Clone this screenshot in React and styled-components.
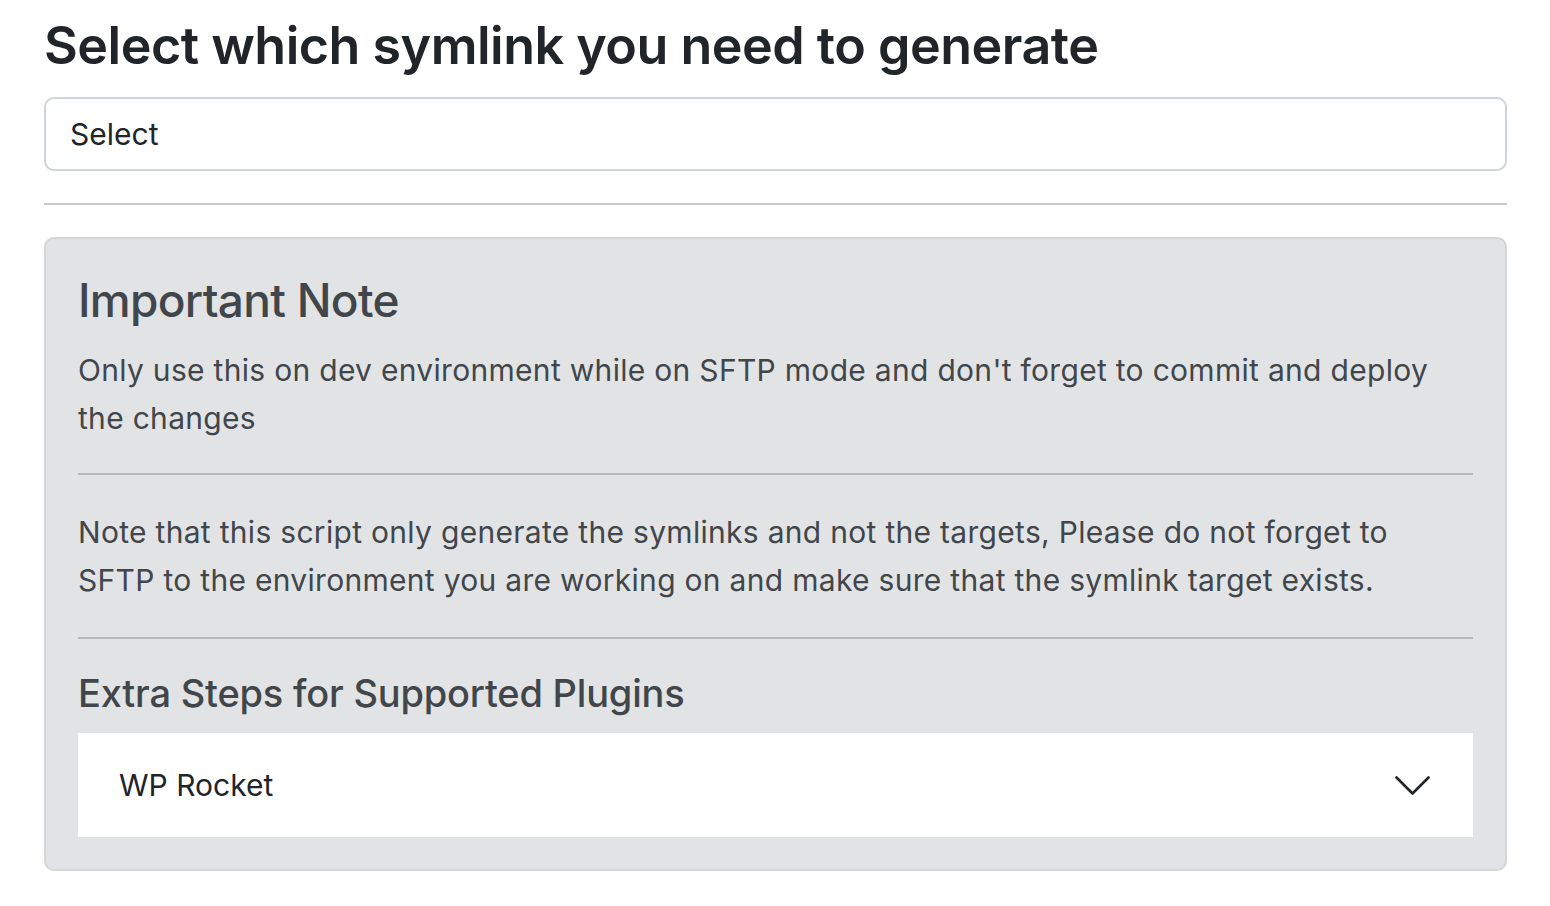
import React, { useState } from 'react';
import styled, { createGlobalStyle } from "styled-components"

const GlobalStyle = createGlobalStyle`
body {
    margin: 0;
    background: #fff;
    font-family: "Inter", "Liberation Sans", sans-serif;
    color: #212529;
}
`

const Page = styled.main`
    width: 1463px;
    padding: 15px 0 0 44px;
`

const Title = styled.h2`
    margin: 0 0 20px;
    font-size: 52px;
    font-weight: 600;
    line-height: 1.2;
    letter-spacing: -0.5px;
`

const SelectBox = styled.div`
    box-sizing: border-box;
    height: 74px;
    display: flex;
    align-items: center;
    padding: 0 24px;
    border: 2px solid #ced4da;
    border-radius: 10px;
    font-size: 30px;
    color: #212529;
`

const Rule = styled.hr`
    margin: ${p => p.$top || '32px'} 0 ${p => p.$bottom || '32px'};
    border: 0;
    border-top: 2px solid ${p => p.$color || '#c9c9ca'};
`

const Note = styled.section`
    box-sizing: border-box;
    border: 2px solid #d3d6d8;
    border-radius: 10px;
    background: #e2e3e5;
    color: #41464b;
    padding: 34px 32px 32px;
`

const NoteTitle = styled.h3`
    margin: 0 0 17px;
    font-size: 46px;
    font-weight: 500;
    line-height: 1.2;
    letter-spacing: -0.7px;
`

const Text = styled.p`
    max-width: 1440px;
    margin: 0;
    font-size: 30px;
    line-height: 48px;
    letter-spacing: 0.3px;
`

const SubTitle = styled.h4`
    margin: 0 0 17px;
    font-size: 38px;
    font-weight: 500;
    line-height: 1.2;
    letter-spacing: -0.2px;
`

const Accordion = styled.div`
    background: #fff;
`

const AccordionButton = styled.button`
    width: 100%;
    height: 104px;
    display: flex;
    align-items: center;
    justify-content: space-between;
    padding: 0 43px 0 41px;
    border: 0;
    background: #fff;
    font-family: inherit;
    font-size: 30px;
    color: #212529;
    cursor: pointer;

    svg {
        transition: transform 0.2s;
        transform: rotate(${p => (p.$open ? '180deg' : '0deg')});
    }
`

const Chevron = () => (
    <svg width="35" height="19" viewBox="0 0 35 19" fill="none">
        <path d="M1.5 1.5 L17.5 17.5 L33.5 1.5" stroke="#212529" strokeWidth="2.6" strokeLinecap="round" strokeLinejoin="round" />
    </svg>
)

const App = () => {
    const [open, setOpen] = useState(false);

    return (
        <Page>
            <GlobalStyle />
            <Title>Select which symlink you need to generate</Title>
            <SelectBox>Select</SelectBox>
            <Rule />
            <Note>
                <NoteTitle>Important Note</NoteTitle>
                <Text>Only use this on dev environment while on SFTP mode and don't forget to commit and deploy the changes</Text>
                <Rule $color="#b9babc" $top="31px" $bottom="33px" />
                <Text>Note that this script only generate the symlinks and not the targets, Please do not forget to SFTP to the environment you are working on and make sure that the symlink target exists.</Text>
                <Rule $color="#b9babc" $top="33px" $bottom="32px" />
                <SubTitle>Extra Steps for Supported Plugins</SubTitle>
                <Accordion>
                    <AccordionButton $open={open} onClick={() => setOpen(!open)}>
                        WP Rocket
                        <Chevron />
                    </AccordionButton>
                </Accordion>
            </Note>
        </Page>
    );
}

export default App;
